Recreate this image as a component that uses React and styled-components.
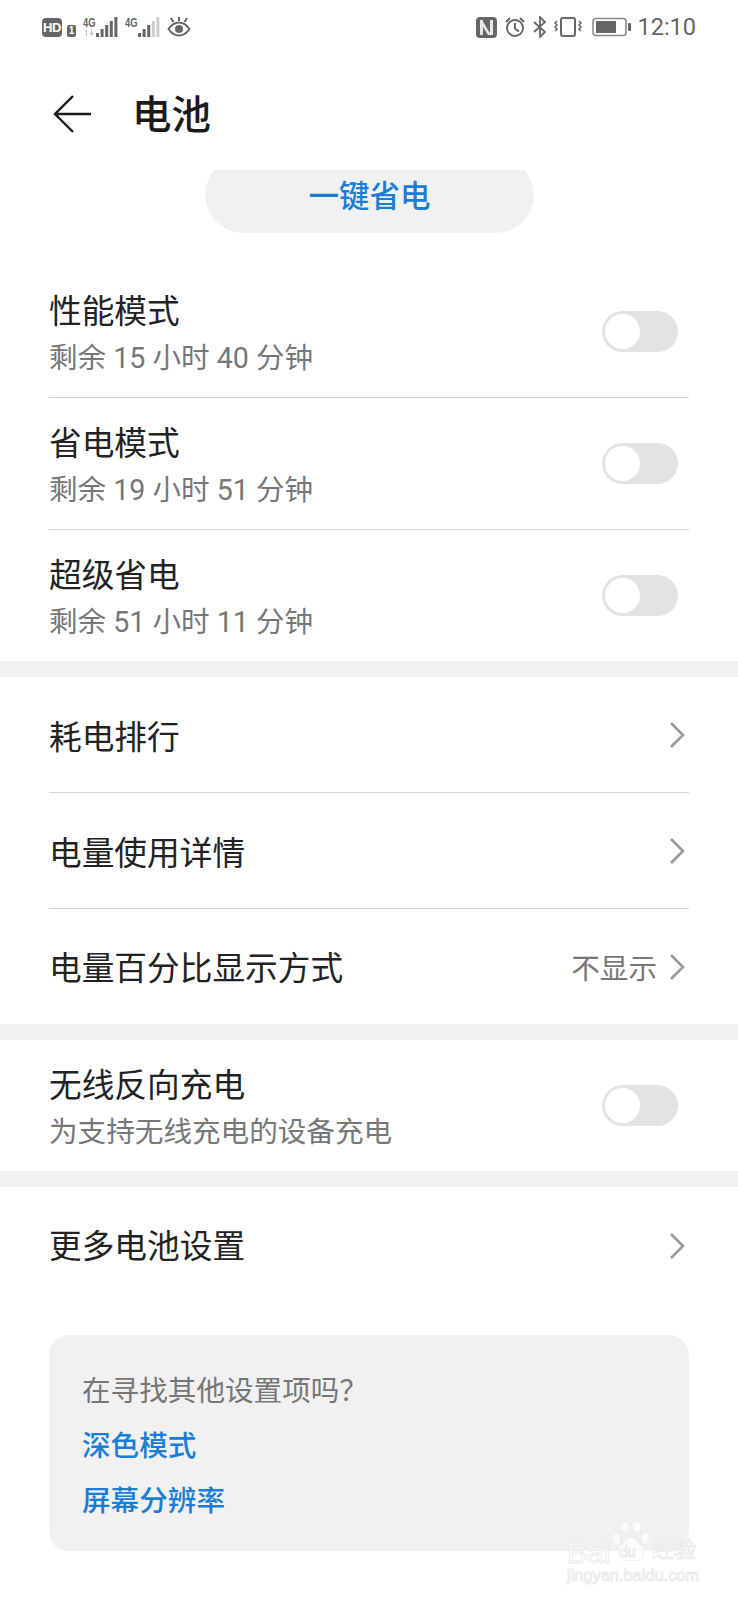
import React from "react";
import styled, { createGlobalStyle } from "styled-components";

const CJK = `Roboto, "Noto Sans CJK SC", sans-serif`;

const GlobalStyle = createGlobalStyle`
  html, body {
    margin: 0;
    background: #fff;
  }
  body {
    font-family: ${CJK};
    text-spacing-trim: space-all;
  }
`;

const Page = styled.div`
  position: relative;
  width: 738px;
  height: 1600px;
  overflow: hidden;
  background: #fff;
`;

const StatusBar = styled.div`
  height: 54px;
  display: flex;
  align-items: center;
  justify-content: space-between;
  padding: 0 42px;
  box-sizing: border-box;
  color: #666;
`;

const StatusGroup = styled.div`
  display: flex;
  align-items: center;
  gap: ${({ $gap }) => $gap || 7}px;
`;

const HdBadge = styled.span`
  width: 20px;
  height: 19px;
  border-radius: 4px;
  background: #666;
  color: #fff;
  font: 700 13px/19px "Liberation Sans", sans-serif;
  text-align: center;
  letter-spacing: -0.5px;
`;

const SimBadge = styled.span`
  width: 9px;
  height: 12px;
  margin: 7px 0 0 -2px;
  border-radius: 2px;
  background: #666;
  color: #fff;
  font: 700 10px/12px "Liberation Sans", sans-serif;
  text-align: center;
`;

const SignalWrap = styled.span`
  position: relative;
  display: flex;
  align-items: flex-start;
  height: 20px;
`;

const NetLabel = styled.span`
  width: 13px;
  font: 700 13px/11px "Liberation Sans", sans-serif;
  color: #666;
  transform: scaleX(0.72);
  transform-origin: left top;
`;

const DataArrows = styled.svg`
  position: absolute;
  left: 1px;
  bottom: 1px;
  width: 10px;
  height: 7px;
`;

const BatteryIcon = styled.svg`
  width: 40px;
  height: 20px;
  margin-left: 3px;
`;

const Time = styled.span`
  margin-left: -2px;
  font-size: 23.5px;
  line-height: 28px;
  color: #666;
`;

const Header = styled.div`
  height: 116px;
  display: flex;
  align-items: center;
  padding: 0 0 0 53px;
  box-sizing: border-box;
`;

const BackIcon = styled.svg`
  width: 40px;
  height: 40px;
  margin-top: 3px;
`;

const Title = styled.h1`
  margin: 0 0 0 39px;
  font-size: 39.5px;
  font-weight: 500;
  line-height: 50px;
  color: #1a1a1a;
  padding-top: 8px;
`;

const SaveClip = styled.div`
  width: 329px;
  height: 63px;
  margin-left: 205px;
  overflow: hidden;
`;

const SaveButton = styled.div`
  height: 76px;
  margin-top: -13px;
  padding-bottom: 3px;
  box-sizing: border-box;
  border-radius: 38px;
  background: #f1f1f1;
  color: #1a7dd6;
  font-size: 30.5px;
  font-weight: 500;
  display: flex;
  align-items: center;
  justify-content: center;
`;

const Section = styled.section`
  padding: 0 49px;
`;

const ModeList = styled(Section)`
  margin-top: 33px;
`;

const Band = styled.div`
  height: 16px;
  background: #f1f1f1;
`;

const Row = styled.div`
  height: ${({ $h }) => $h}px;
  padding-top: ${({ $pad }) => $pad || 0}px;
  display: flex;
  align-items: center;
  justify-content: space-between;
  box-sizing: border-box;
  border-bottom: ${({ $last }) => ($last ? "none" : "1px solid #d4d4d4")};
`;

const RowText = styled.div`
  display: flex;
  flex-direction: column;
  gap: 8px;
  padding-top: 5px;
`;

const RowTitle = styled.div`
  font-size: 32.7px;
  line-height: 41px;
  color: #222;
  margin-top: ${({ $nudge }) => $nudge || 0}px;
`;

const RowSub = styled.div`
  font-size: 28.6px;
  line-height: 35px;
  color: #777;
`;

const RowValue = styled.div`
  display: flex;
  align-items: center;
  gap: 11px;
  margin-right: 3px;
  font-size: 28.6px;
  color: #777;
`;

const Toggle = styled.div`
  width: 76px;
  height: 41px;
  margin-right: 11px;
  padding: 3px;
  box-sizing: border-box;
  border-radius: 21px;
  background: #e3e3e3;
`;

const Knob = styled.div`
  width: 35px;
  height: 35px;
  border-radius: 50%;
  background: #fff;
`;

const Chevron = styled.svg`
  width: 18px;
  height: 28px;
`;

const TipCard = styled.div`
  margin: 31px 49px 0;
  height: 216px;
  padding: 33px 33px 0;
  box-sizing: border-box;
  border-radius: 20px;
  background: #f1f1f1;
`;

const TipTitle = styled.div`
  font-size: 28.6px;
  line-height: 46px;
  color: #777;
`;

const TipLink = styled.div`
  margin-top: 9px;
  font-size: 28.6px;
  font-weight: 500;
  line-height: 46px;
  color: #1a7dd6;
`;

const Watermark = styled.div`
  position: absolute;
  left: 566px;
  top: 1518px;
  width: 172px;
  height: 82px;
`;

const MarkWord = styled.span`
  position: absolute;
  left: ${({ $x }) => $x}px;
  top: ${({ $y }) => $y}px;
  font: ${({ $size }) => $size}px/1 "Liberation Sans", "Noto Sans CJK SC", sans-serif;
  white-space: nowrap;
  color: rgba(255, 255, 255, 0.7);
  -webkit-text-stroke: 1px #ebebeb;
`;

const MarkPaw = styled.svg`
  position: absolute;
  left: 46px;
  top: 2px;
  width: 38px;
  height: 42px;
`;

const Bars = ({ lit }) => (
  <svg width="22" height="20" viewBox="0 0 22 20">
    {[0, 1, 2, 3, 4].map((i) => (
      <rect
        key={i}
        x={i * 4.6}
        y={16 - i * 4}
        width="3"
        height={4 + i * 4}
        fill={i < lit ? "#666" : "#ccc"}
      />
    ))}
  </svg>
);

const ModeRow = ({ title, sub, h, last }) => (
  <Row $h={h} $last={last}>
    <RowText>
      <RowTitle>{title}</RowTitle>
      <RowSub>{sub}</RowSub>
    </RowText>
    <Toggle>
      <Knob />
    </Toggle>
  </Row>
);

const Arrow = () => (
  <Chevron viewBox="0 0 18 28">
    <path d="M3 2l12 12L3 26" fill="none" stroke="#999" strokeWidth="2.6" />
  </Chevron>
);

const LinkRow = ({ title, value, h, pad, nudge, last }) => (
  <Row $h={h} $pad={pad} $last={last}>
    <RowTitle $nudge={nudge}>{title}</RowTitle>
    <RowValue>
      {value}
      <Arrow />
    </RowValue>
  </Row>
);

export default function App() {
  return (
    <Page>
      <GlobalStyle />
      <StatusBar>
        <StatusGroup>
          <HdBadge>HD</HdBadge>
          <SimBadge>1</SimBadge>
          <SignalWrap>
            <NetLabel>4G</NetLabel>
            <Bars lit={5} />
            <DataArrows viewBox="0 0 10 7">
              <path d="M2.500 7V1M1 3l1.500-2M7.500 0v6M6 4l1.500 2 1.500-2" fill="none" stroke="#c4c4c4" strokeWidth="1.200" />
            </DataArrows>
          </SignalWrap>
          <SignalWrap>
            <NetLabel>4G</NetLabel>
            <Bars lit={3} />
          </SignalWrap>
          <svg width="24" height="20" viewBox="0 0 24 20">
            <path d="M1.500 12C5 7 8.500 5.500 12 5.500S19 7 22.500 12C19 17 15.500 18.500 12 18.500S5 17 1.500 12z" fill="none" stroke="#666" strokeWidth="2" />
            <circle cx="12" cy="12" r="4" fill="#666" />
            <path d="M4 1l2.500 4M12 0v4M20 1l-2.500 4" stroke="#666" strokeWidth="2" />
          </svg>
        </StatusGroup>
        <StatusGroup>
          <svg width="21" height="21" viewBox="0 0 21 21">
            <rect width="21" height="21" rx="4" fill="#666" />
            <path d="M4 3h3v15H4zM14 3h3v15h-3zM6 3l9 15h-3L4 5z" fill="#fff" opacity="0.85" />
          </svg>
          <svg width="22" height="22" viewBox="0 0 22 22">
            <circle cx="11" cy="12" r="8" fill="none" stroke="#666" strokeWidth="2" />
            <path d="M11 7v5.500l4 3M2 6l4-4M20 6l-4-4" fill="none" stroke="#666" strokeWidth="2" />
          </svg>
          <svg width="14" height="22" viewBox="0 0 14 22">
            <path d="M1 6l11 10-5 5V1l5 5L1 16" fill="none" stroke="#666" strokeWidth="1.800" />
          </svg>
          <svg width="28" height="22" viewBox="0 0 28 22">
            <rect x="7" y="2" width="14" height="18" rx="2" fill="none" stroke="#666" strokeWidth="2" />
            <path d="M3 5l-2 2 2 2-2 2 2 2-2 2M25 5l2 2-2 2 2 2-2 2 2 2" fill="none" stroke="#666" strokeWidth="1.500" />
          </svg>
          <BatteryIcon viewBox="0 0 40 20">
            <rect x="1" y="1.500" width="33" height="17" rx="3" fill="none" stroke="#888" strokeWidth="1.500" />
            <rect x="4" y="4" width="20" height="12" fill="#666" />
            <rect x="36" y="6" width="3" height="8" rx="1" fill="#666" />
          </BatteryIcon>
          <Time>12:10</Time>
        </StatusGroup>
      </StatusBar>

      <Header>
        <BackIcon viewBox="0 0 40 40">
          <path d="M38 20H3M20 2L2 20l18 18" fill="none" stroke="#1a1a1a" strokeWidth="2.400" />
        </BackIcon>
        <Title>电池</Title>
      </Header>

      <SaveClip>
        <SaveButton>一键省电</SaveButton>
      </SaveClip>

      <ModeList>
        <ModeRow title="性能模式" sub="剩余 15 小时 40 分钟" h={132} />
        <ModeRow title="省电模式" sub="剩余 19 小时 51 分钟" h={132} />
        <ModeRow title="超级省电" sub="剩余 51 小时 11 分钟" h={131} last />
      </ModeList>
      <Band />

      <Section>
        <LinkRow title="耗电排行" h={116} pad={1} nudge={6} />
        <LinkRow title="电量使用详情" h={116} pad={1} nudge={6} />
        <LinkRow title="电量百分比显示方式" value="不显示" h={115} nudge={6} last />
      </Section>
      <Band />

      <Section>
        <ModeRow title="无线反向充电" sub="为支持无线充电的设备充电" h={131} last />
      </Section>
      <Band />

      <Section>
        <LinkRow title="更多电池设置" h={117} nudge={3} last />
      </Section>

      <TipCard>
        <TipTitle>在寻找其他设置项吗？</TipTitle>
        <TipLink>深色模式</TipLink>
        <TipLink>屏幕分辨率</TipLink>
      </TipCard>

      <Watermark>
        <MarkPaw viewBox="0 0 44 50">
          <g fill="rgba(255,255,255,0.7)" stroke="#ebebeb">
            <ellipse cx="5" cy="22" rx="5" ry="7" />
            <ellipse cx="15" cy="8" rx="5" ry="7" />
            <ellipse cx="29" cy="8" rx="5" ry="7" />
            <ellipse cx="39" cy="22" rx="5" ry="7" />
            <path d="M22 20c6 0 8 6 12 10s5 18-4 18H14C5 48 6 34 10 30s6-10 12-10z" />
          </g>
        </MarkPaw>
        <MarkWord $x={1} $y={20} $size={30}>Bai</MarkWord>
        <MarkWord $x={54} $y={27} $size={14}>du</MarkWord>
        <MarkWord $x={86} $y={21} $size={22}>经验</MarkWord>
        <MarkWord $x={1} $y={49} $size={16.4}>jingyan.baidu.com</MarkWord>
      </Watermark>
    </Page>
  );
}
